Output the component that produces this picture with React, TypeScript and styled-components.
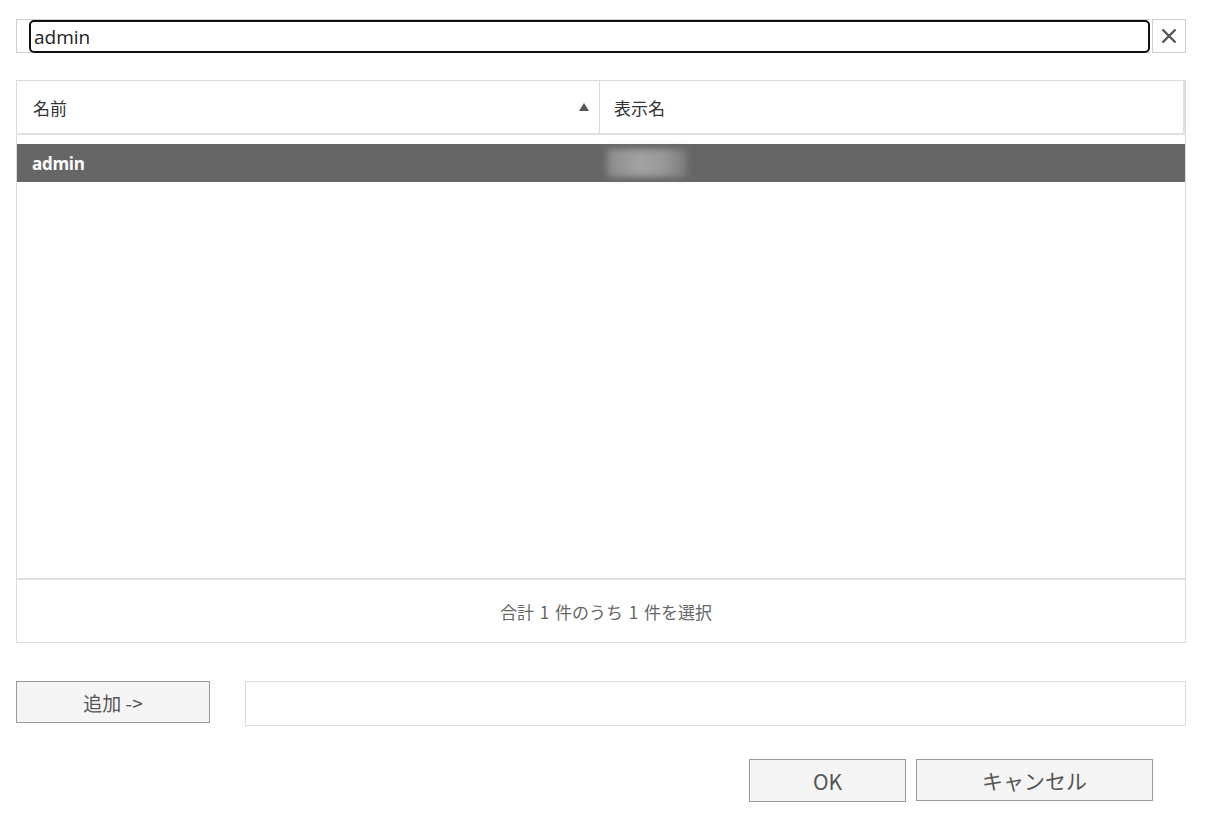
import styled, { createGlobalStyle } from "styled-components";

const GlobalStyle = createGlobalStyle`
  html, body {
    margin: 0;
    padding: 0;
    background: #ffffff;
  }
  body {
    font-family: "Noto Sans", "Noto Sans CJK JP", sans-serif;
    color: #333;
  }
`;

const JP = `"Noto Sans CJK JP", "Noto Sans", sans-serif`;

export default function App() {
  return (
    <>
      <GlobalStyle />
      <Page>
        <SearchRow>
          <SearchBox>
            <SearchInput defaultValue="admin" />
          </SearchBox>
          <ClearButton aria-label="clear">
            <svg width="18" height="18" viewBox="0 0 18 18">
              <path
                d="M2.5 2.5 L15.5 15.5 M15.5 2.5 L2.5 15.5"
                stroke="#555"
                strokeWidth="2.4"
              />
            </svg>
          </ClearButton>
        </SearchRow>

        <Grid>
          <HeaderRow>
            <HeaderCell>
              <span>名前</span>
              <SortArrow />
            </HeaderCell>
            <HeaderCell $last>
              <span>表示名</span>
            </HeaderCell>
          </HeaderRow>

          <Body>
            <DataRow $selected>
              <NameCell>admin</NameCell>
              <DisplayCell>
                <Blurred aria-hidden />
              </DisplayCell>
            </DataRow>
          </Body>

          <Footer>合計 1 件のうち 1 件を選択</Footer>
        </Grid>

        <AddRow>
          <Button $width={194} $height={42} $size={19}>
            追加 -&gt;
          </Button>
          <AddedField />
        </AddRow>

        <Actions>
          <Button $width={157} $height={43} $size={21}>
            OK
          </Button>
          <Button $width={237} $height={42} $size={21}>
            キャンセル
          </Button>
        </Actions>
      </Page>
    </>
  );
}

const Page = styled.div`
  width: 1170px;
  padding: 19px 0 0 16px;
  display: flex;
  flex-direction: column;
`;

const SearchRow = styled.div`
  display: flex;
  align-items: stretch;
  height: 34px;
`;

const SearchBox = styled.div`
  flex: 1;
  display: flex;
  border: 1px solid #cfcfcf;
  border-right: none;
  padding-left: 12px;
`;

const SearchInput = styled.input`
  flex: 1;
  margin: 0;
  height: 33px;
  box-sizing: border-box;
  border: 2px solid #111;
  border-radius: 5px;
  outline: none;
  padding: 0 3px;
  font-family: "Open Sans", "Noto Sans", sans-serif;
  font-size: 19px;
  color: #222;
  background: #fff;
`;

const ClearButton = styled.button`
  width: 34px;
  margin-left: 2px;
  padding: 0;
  border: 1px solid #cfcfcf;
  background: #fff;
  display: flex;
  align-items: center;
  justify-content: center;
  cursor: pointer;
`;

const Grid = styled.div`
  margin-top: 27px;
  height: 563px;
  box-sizing: border-box;
  border: 1px solid #dcdcdc;
  display: flex;
  flex-direction: column;
`;

const HeaderRow = styled.div`
  display: flex;
  height: 54px;
  box-sizing: border-box;
  border-bottom: 2px solid #e0e0e0;
  border-right: 2px solid #e0e0e0;
`;

const HeaderCell = styled.div<{ $last?: boolean }>`
  flex: ${({ $last }) => ($last ? "1" : "0 0 583px")};
  display: flex;
  align-items: center;
  justify-content: space-between;
  padding: 0 10px 0 ${({ $last }) => ($last ? "14px" : "16px")};
  box-sizing: border-box;
  border-right: ${({ $last }) => ($last ? "none" : "1px solid #dcdcdc")};
  font-family: ${JP};
  font-size: 17px;
  color: #333;
`;

const SortArrow = styled.span`
  width: 0;
  height: 0;
  border-left: 5px solid transparent;
  border-right: 5px solid transparent;
  border-bottom: 8px solid #555;
`;

const Body = styled.div`
  flex: 1;
  padding-top: 9px;
`;

const DataRow = styled.div<{ $selected?: boolean }>`
  display: flex;
  height: 38px;
  align-items: center;
  background: ${({ $selected }) => ($selected ? "#666666" : "#fff")};
  color: ${({ $selected }) => ($selected ? "#fff" : "#333")};
`;

const NameCell = styled.div`
  flex: 0 0 583px;
  padding-left: 15px;
  box-sizing: border-box;
  font-family: "Open Sans", "Noto Sans", sans-serif;
  font-weight: 700;
  font-size: 17px;
  letter-spacing: -0.3px;
`;

const DisplayCell = styled.div`
  flex: 1;
  padding-left: 7px;
  display: flex;
  align-items: center;
`;

const Blurred = styled.div`
  width: 80px;
  height: 28px;
  background: linear-gradient(90deg, #8a8a8a, #a2a2a2 40%, #999 70%, #7a7a7a);
  filter: blur(3px);
`;

const Footer = styled.div`
  height: 64px;
  box-sizing: border-box;
  border-top: 2px solid #e0e0e0;
  display: flex;
  align-items: center;
  justify-content: center;
  font-family: ${JP};
  font-size: 17px;
  color: #666;
  padding-left: 10px;
  word-spacing: 2px;
`;

const AddRow = styled.div`
  margin-top: 38px;
  display: flex;
  align-items: flex-start;
  gap: 35px;
`;

const Button = styled.button<{ $width: number; $height: number; $size: number }>`
  width: ${({ $width }) => $width}px;
  height: ${({ $height }) => $height}px;
  margin: 0;
  padding: 0;
  border: 1px solid #9a9a9a;
  background: #f5f5f5;
  color: #555;
  font-family: ${JP};
  font-size: ${({ $size }) => $size}px;
  cursor: pointer;
`;

const AddedField = styled.div`
  flex: 1;
  height: 45px;
  box-sizing: border-box;
  border: 1px solid #dcdcdc;
`;

const Actions = styled.div`
  margin-top: 33px;
  padding-right: 33px;
  display: flex;
  justify-content: flex-end;
  align-items: flex-start;
  gap: 10px;
`;
